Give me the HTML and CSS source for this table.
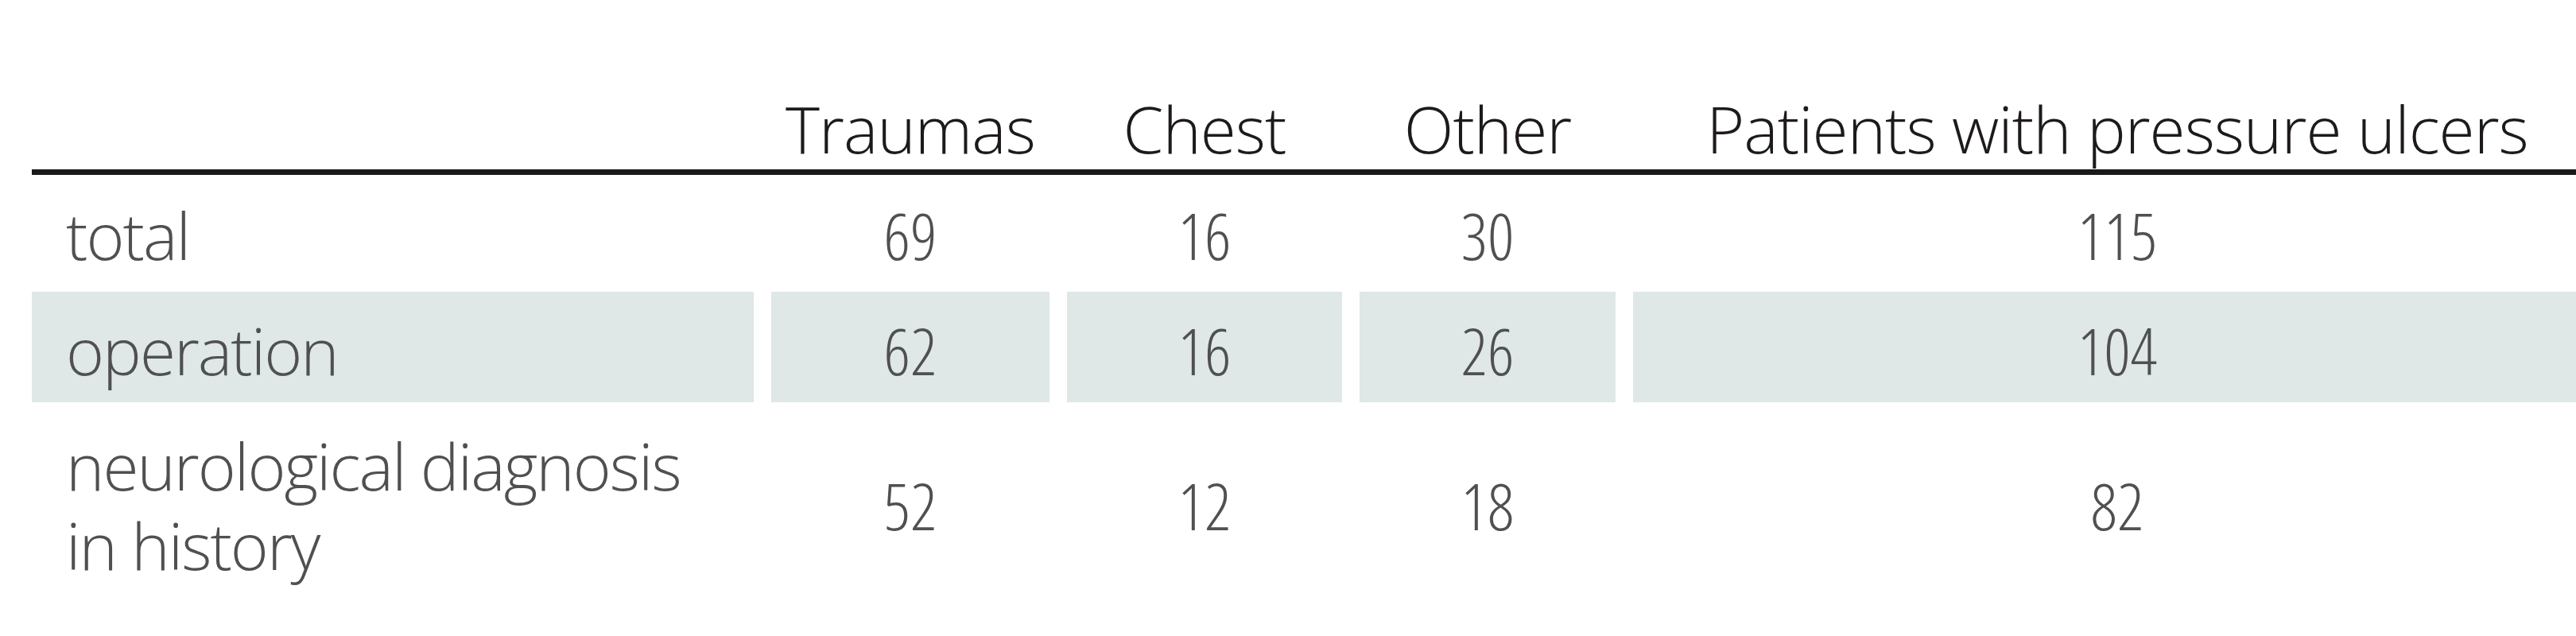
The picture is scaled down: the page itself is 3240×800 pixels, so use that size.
FILE: index.html
```html
<!DOCTYPE html>
<html lang="en">
<head>
<meta charset="utf-8">
<title>Patients with pressure ulcers</title>
<link rel="stylesheet" href="styles.css">
</head>
<body>
<div class="table">
  <div class="row head">
    <div class="cell label"></div>
    <div class="cell">Traumas</div>
    <div class="cell">Chest</div>
    <div class="cell">Other</div>
    <div class="cell last">Patients with pressure ulcers</div>
  </div>
  <div class="row first">
    <div class="cell label">total</div>
    <div class="cell num">69</div>
    <div class="cell num">16</div>
    <div class="cell num">30</div>
    <div class="cell num last">115</div>
  </div>
  <div class="row shaded">
    <div class="cell label">operation</div>
    <div class="cell num">62</div>
    <div class="cell num">16</div>
    <div class="cell num">26</div>
    <div class="cell num last">104</div>
  </div>
  <div class="row">
    <div class="cell label">neurological diagnosis<br>in history</div>
    <div class="cell num">52</div>
    <div class="cell num">12</div>
    <div class="cell num">18</div>
    <div class="cell num last">82</div>
  </div>
</div>
</body>
</html>
```

FILE: styles.css
```css
html, body {
  margin: 0;
  padding: 0;
  background: #ffffff;
  overflow: hidden;
}

.table {
  padding-left: 40px;
  padding-top: 111px;
  font-family: "Open Sans", "Liberation Sans", sans-serif;
  font-weight: 300;
  font-size: 82px;
  line-height: 100px;
  color: #505050;
}

.row {
  display: grid;
  grid-template-columns: 908px 350px 346px 322px 1fr;
  column-gap: 22px;
  margin-bottom: 6px;
}

.cell {
  text-align: center;
  padding: 23px 0 16px 0;
  display: flex;
  align-items: center;
  justify-content: center;
  white-space: nowrap;
}

.cell.num {
  font-stretch: 87.5%;
}

.cell.label {
  justify-content: flex-start;
  text-align: left;
  padding-left: 43px;
  letter-spacing: -2px;
}

.cell.last {
  padding-left: 32px;
}

.head {
  border-bottom: 7px solid #1a1a1a;
  margin-bottom: 2px;
  color: #1e1a1b;
  letter-spacing: -1px;
}

.head .cell {
  padding-top: 0;
  padding-bottom: 2px;
}

.shaded .cell {
  background: #dfe7e7;
}
```
